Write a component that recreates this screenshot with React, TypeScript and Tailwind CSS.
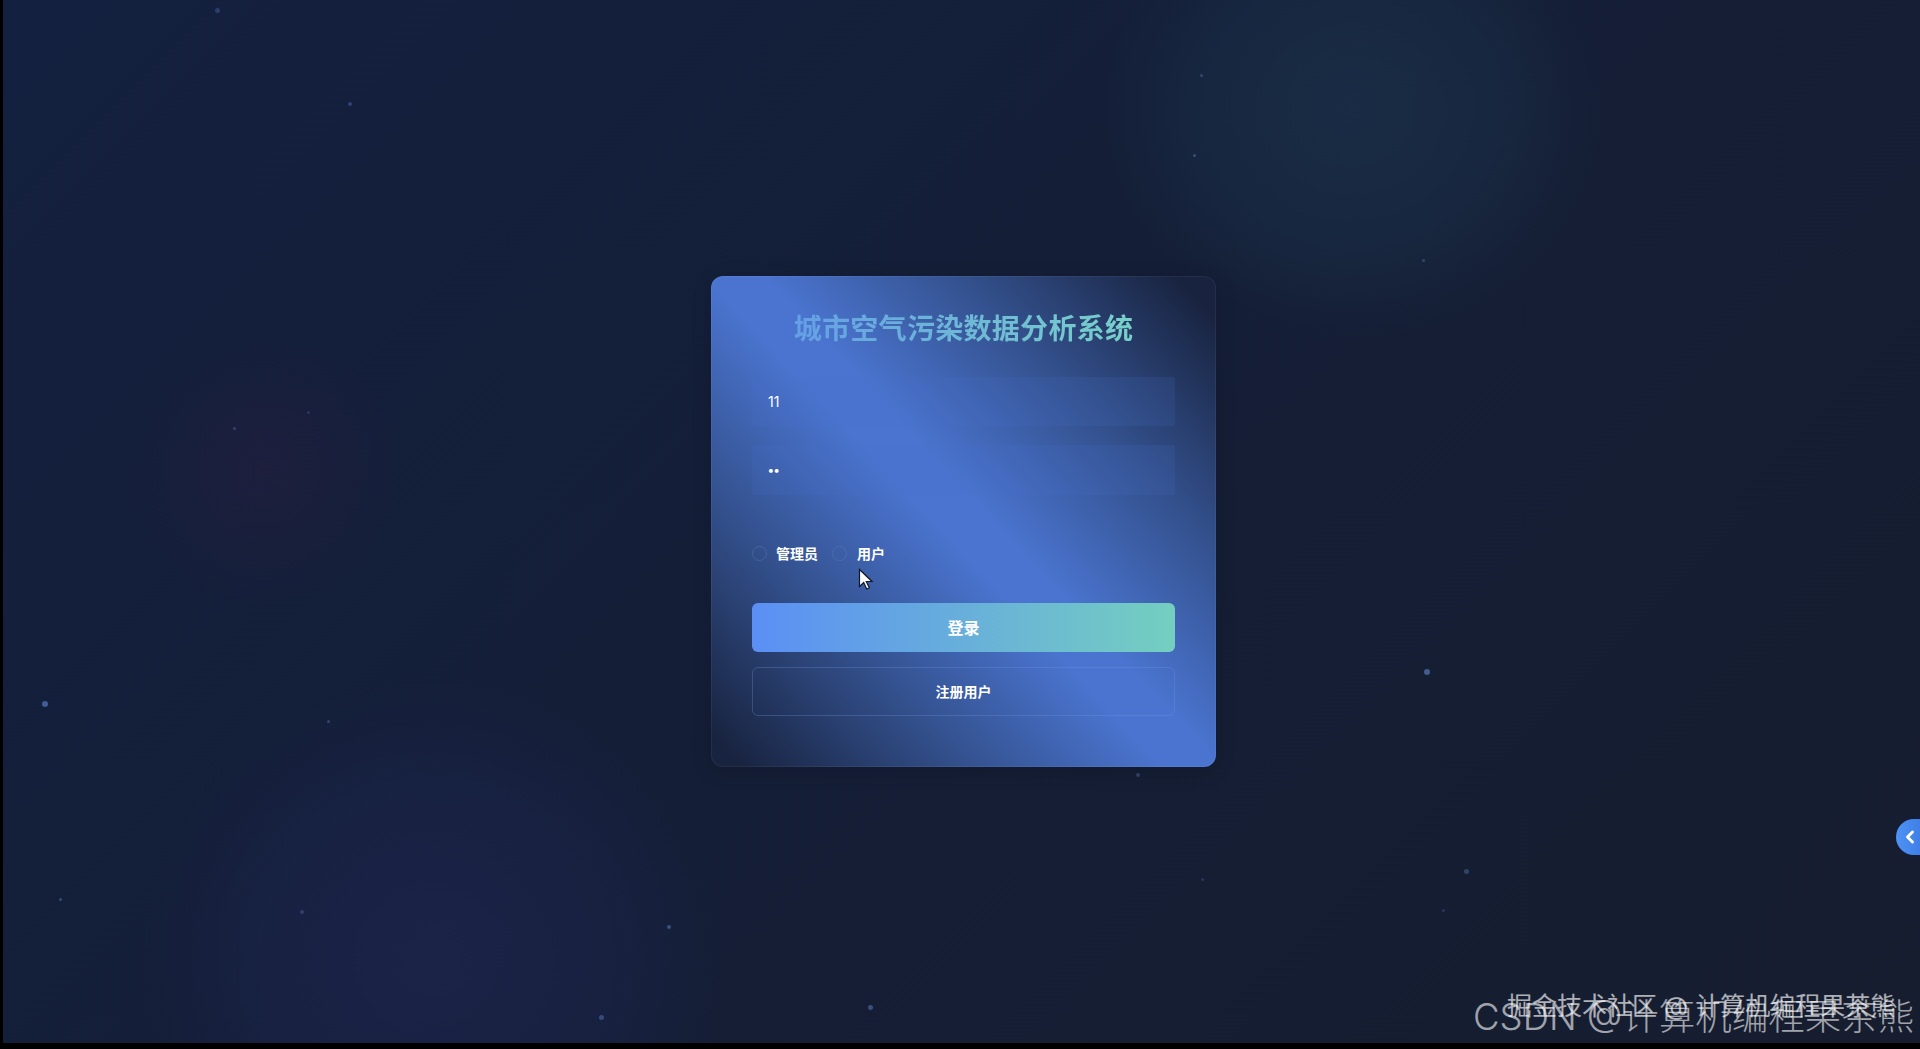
import { ChevronLeft } from 'lucide-react';

const cjk = 'font-["Inter","Noto_Sans_CJK_SC",sans-serif]';

// x, y, size, opacity of the background specks
const particles: [number, number, number, number][] = [
  [212, 8, 5, 0.25],
  [345, 102, 4, 0.3],
  [1197, 74, 3, 0.3],
  [1190, 154, 3, 0.35],
  [1419, 259, 3, 0.3],
  [230, 427, 3, 0.3],
  [304, 411, 3, 0.2],
  [39, 701, 6, 0.5],
  [324, 720, 3, 0.3],
  [1421, 669, 6, 0.5],
  [1461, 869, 5, 0.3],
  [1439, 909, 3, 0.2],
  [1198, 878, 3, 0.2],
  [56, 898, 3, 0.35],
  [297, 910, 4, 0.25],
  [664, 925, 4, 0.4],
  [596, 1015, 5, 0.35],
  [865, 1005, 5, 0.4],
  [1133, 773, 4, 0.3],
];

function Background() {
  return (
    <>
      <div className="absolute left-[1100px] top-[-120px] h-[460px] w-[500px] rounded-full bg-[radial-gradient(closest-side,rgba(34,66,92,0.38),rgba(34,66,92,0.24)_60%,transparent)]" />
      <div className="absolute left-[120px] top-[330px] h-[280px] w-[280px] rounded-full bg-[radial-gradient(closest-side,rgba(70,30,70,0.18),transparent)]" />
      <div className="absolute left-[140px] top-[680px] h-[560px] w-[580px] rounded-full bg-[radial-gradient(closest-side,rgba(36,42,92,0.45),rgba(32,40,90,0.26)_65%,transparent)]" />
      {particles.map(([x, y, size, opacity], i) => (
        <span
          key={i}
          className="absolute rounded-full bg-[#6f9bf0]"
          style={{ left: x, top: y, width: size, height: size, opacity }}
        />
      ))}
    </>
  );
}

export default function App() {
  return (
    <div className={`h-[1049px] w-full overflow-hidden bg-black pb-[6px] pl-[3px] ${cjk}`}>
      <div className="relative flex h-full items-center justify-center overflow-hidden bg-[linear-gradient(135deg,#13203f_0%,#141e37_45%,#161d2f_100%)] pl-[4px]">
        <Background />

        <div className="relative w-[505px] rounded-[12px] border border-white/5 bg-[linear-gradient(47deg,#18233f_3%,#33508c_26%,#4a74cf_47%,#4a74cf_53%,#33508c_74%,#18233f_96%)] bg-origin-border px-[40px] pb-[50px] pt-[34px] shadow-[0_4px_20px_rgba(0,0,0,0.15)]">
          <h1 className="mb-[30px] bg-[linear-gradient(90deg,#629ae8,#7ad6c6)] bg-clip-text text-center text-[28px] font-bold leading-[36px] tracking-[0.3px] text-transparent">
            城市空气污染数据分析系统
          </h1>

          <input
            type="text"
            readOnly
            value="11"
            className="mb-[19px] block h-[49px] w-full rounded-[2px] bg-[#4a74cf]/15 px-[16px] text-[14px] text-white outline-none"
          />
          <input
            type="password"
            readOnly
            value="11"
            className="mb-[48px] block h-[50px] w-full rounded-[2px] bg-[#4a74cf]/15 px-[16px] pb-[2px] text-[12px] font-bold text-white outline-none"
          />

          <div className="mb-[40px] flex h-[20px] items-center text-[14px] font-semibold text-white">
            <label className="mr-[14px] flex items-center gap-[9px]">
              <input type="radio" name="role" className="h-[15px] w-[15px] appearance-none rounded-full border border-[#5f7fc4]/40" />
              管理员
            </label>
            <label className="flex items-center gap-[10px]">
              <input type="radio" name="role" className="h-[15px] w-[15px] appearance-none rounded-full border border-[#5f7fc4]/40" />
              用户
            </label>
          </div>

          <button className="mb-[15px] block h-[49px] w-full rounded-[6px] bg-[linear-gradient(90deg,#5b8ff5,#74cfc0)] text-[16px] font-semibold text-white">
            登录
          </button>
          <button className="block h-[49px] w-full rounded-[6px] border border-[#6f94e0]/30 text-[14px] font-semibold text-white">
            注册用户
          </button>
        </div>

        {/* mouse pointer from the recording */}
        <svg className="absolute left-[855px] top-[568px]" width="16" height="24" viewBox="0 0 16 24">
          <path d="M1.5 1.5v17l4.2-4 3 6.5 2.6-1.2-3-6.3h5.7z" fill="#fff" stroke="#10182c" strokeWidth="1.2" />
        </svg>

        <div className="absolute bottom-[188px] right-0 flex h-[36px] w-[24px] items-center justify-end rounded-l-full bg-[linear-gradient(90deg,#4f93f5,#3f7fe8)]">
          <ChevronLeft className="h-[20px] w-[20px] text-white" strokeWidth={3.5} />
        </div>
      </div>

      {/* video watermarks */}
      <div className="pointer-events-none absolute left-[1473px] top-[994px] whitespace-nowrap text-[36.5px] font-light leading-[46px] text-white/60">
        CSDN @计算机编程果茶熊
      </div>
      <div className="pointer-events-none absolute left-[1507px] top-[989px] whitespace-nowrap text-[25px] leading-[34px] text-white/65">
        掘金技术社区 @ 计算机编程果茶熊
      </div>
    </div>
  );
}
